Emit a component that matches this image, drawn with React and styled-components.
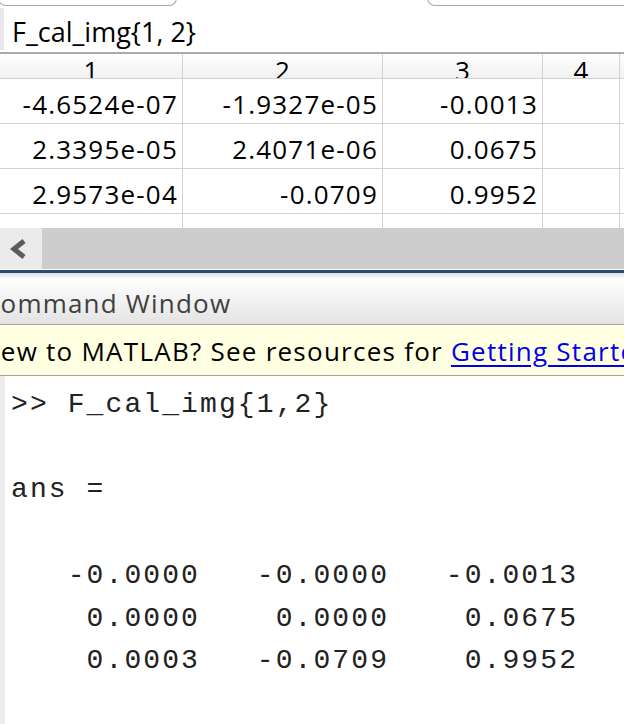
import React from 'react';
import styled, { createGlobalStyle } from 'styled-components';

const GlobalStyle = createGlobalStyle`
  html, body {
    margin: 0;
    padding: 0;
    background: #ffffff;
    overflow: hidden;
  }
  * { box-sizing: border-box; }
`;

const columns = [183, 200, 160, 77, 40];

const cells = [
  ['-4.6524e-07', '-1.9327e-05', '-0.0013'],
  ['2.3395e-05', '2.4071e-06', '0.0675'],
  ['2.9573e-04', '-0.0709', '0.9952'],
];

const consoleText = `>> F_cal_img{1,2}

ans =

   -0.0000   -0.0000   -0.0013
    0.0000    0.0000    0.0675
    0.0003   -0.0709    0.9952
`;

const Page = styled.div`
  width: 624px;
  height: 724px;
  overflow: hidden;
  display: flex;
  flex-direction: column;
  font-family: "Open Sans", "Noto Sans", sans-serif;
  color: #000;
`;

const TabStrip = styled.div`
  height: 6px;
  display: flex;
  align-items: flex-end;
  overflow: hidden;
  flex-shrink: 0;
`;

const Tab = styled.div`
  flex-shrink: 0;
  height: 30px;
  width: ${p => p.$w}px;
  margin-left: ${p => p.$ml};
  margin-right: ${p => p.$mr || 0}px;
  border: 1px solid #a8a8a8;
  border-top: none;
  border-radius: 0 0 8px 8px;
  background: #fff;
`;

const TitleBar = styled.div`
  height: 48px;
  flex-shrink: 0;
  display: flex;
  align-items: center;
  border-bottom: 2px solid #a9a9a9;
`;

const Strip = styled.div`
  width: 4px;
  height: 42px;
  background: #e9e9e9;
`;

const Title = styled.div`
  margin-left: 8px;
  padding-top: 5px;
  font-size: 27px;
  line-height: normal;
  white-space: nowrap;
`;

const Grid = styled.div`
  flex-shrink: 0;
  display: flex;
  flex-direction: column;
`;

const HeaderRow = styled.div`
  display: flex;
  height: 25px;
  border-bottom: 1px solid #d2d2d2;
  background: linear-gradient(#ffffff, #f1f1f1);
  overflow: hidden;
`;

const HeadCell = styled.div`
  flex-shrink: 0;
  width: ${p => p.$w}px;
  height: 24px;
  border-right: 1px solid #d2d2d2;
  text-align: center;
  font-size: 26px;
  line-height: 32.5px;
  overflow: hidden;
`;

const Row = styled.div`
  display: flex;
  height: ${p => p.$h || 45}px;
  border-bottom: ${p => (p.$filler ? 'none' : '1px solid #d2d2d2')};
`;

const Cell = styled.div`
  flex-shrink: 0;
  width: ${p => p.$w}px;
  border-right: 1px solid #d2d2d2;
  text-align: right;
  padding: 7px 4px 0 0;
  font-size: 26px;
  letter-spacing: 1.2px;
  line-height: normal;
  white-space: nowrap;
  overflow: hidden;
`;

const ScrollBar = styled.div`
  height: 41px;
  flex-shrink: 0;
  display: flex;
  margin-bottom: 1px;
`;

const ScrollButton = styled.div`
  width: 42px;
  background: #ebebeb;
  display: flex;
  align-items: center;
  justify-content: center;
  padding-right: 4px;
`;

const Track = styled.div`
  flex: 1;
  background: #cdcdcd;
`;

const DockEdge = styled.div`
  flex-shrink: 0;
  height: 3px;
  background: #2d4b6e;
`;

const DockGlow = styled.div`
  flex-shrink: 0;
  height: 5px;
  background: linear-gradient(#dde4ec, #f3f5f8);
`;

const PanelHeader = styled.div`
  flex-shrink: 0;
  height: 47px;
  padding-top: 7px;
  background: linear-gradient(#ffffff, #e3e3e3);
  border-bottom: 1px solid #a3a3a3;
  color: #3f3f3f;
  font-size: 26px;
  letter-spacing: 1.2px;
  line-height: normal;
  white-space: nowrap;
  overflow: hidden;
  text-indent: -17px;
`;

const Banner = styled.div`
  flex-shrink: 0;
  height: 51px;
  padding-top: 8px;
  background: #ffffe1;
  border-bottom: 1px solid #a3a3a3;
  font-size: 26px;
  letter-spacing: 1.25px;
  line-height: normal;
  white-space: nowrap;
  overflow: hidden;
  text-indent: -20px;
`;

const Link = styled.span`
  color: #0000ee;
  text-decoration: underline;
  text-underline-offset: 4px;
`;

const Console = styled.div`
  flex: 1;
  display: flex;
`;

const Gutter = styled.div`
  width: 5px;
  background: #ececec;
`;

const Output = styled.pre`
  margin: 0;
  padding: 8px 0 0 6px;
  font-family: "Liberation Mono", "Courier New", monospace;
  font-size: 28px;
  letter-spacing: 2.1px;
  line-height: 42.7px;
  color: #222;
`;

function Chevron() {
  return (
    <svg width="20" height="20" viewBox="0 0 20 20">
      <polyline points="15,2 5,10 15,18" fill="none" stroke="#5c5c5c" strokeWidth="5" />
    </svg>
  );
}

export default function App() {
  return (
    <Page>
      <GlobalStyle />
      <TabStrip>
        <Tab $w={179} $ml="-2px" />
        <Tab $w={207} $ml="auto" $mr={-10} />
      </TabStrip>
      <TitleBar>
        <Strip />
        <Title>F_cal_img{'{'}1, 2{'}'}</Title>
      </TitleBar>
      <Grid>
        <HeaderRow>
          {columns.map((w, i) => (
            <HeadCell key={i} $w={w}>{i < 4 ? i + 1 : ''}</HeadCell>
          ))}
        </HeaderRow>
        {cells.map((row, r) => (
          <Row key={r}>
            {columns.map((w, c) => (
              <Cell key={c} $w={w}>{row[c] || ''}</Cell>
            ))}
          </Row>
        ))}
        <Row $h={14} $filler>
          {columns.map((w, c) => (
            <Cell key={c} $w={w} />
          ))}
        </Row>
      </Grid>
      <ScrollBar>
        <ScrollButton><Chevron /></ScrollButton>
        <Track />
      </ScrollBar>
      <DockEdge />
      <DockGlow />
      <PanelHeader>Command Window</PanelHeader>
      <Banner>
        New to MATLAB? See resources for <Link>Getting Started</Link>.
      </Banner>
      <Console>
        <Gutter />
        <Output>{consoleText}</Output>
      </Console>
    </Page>
  );
}
